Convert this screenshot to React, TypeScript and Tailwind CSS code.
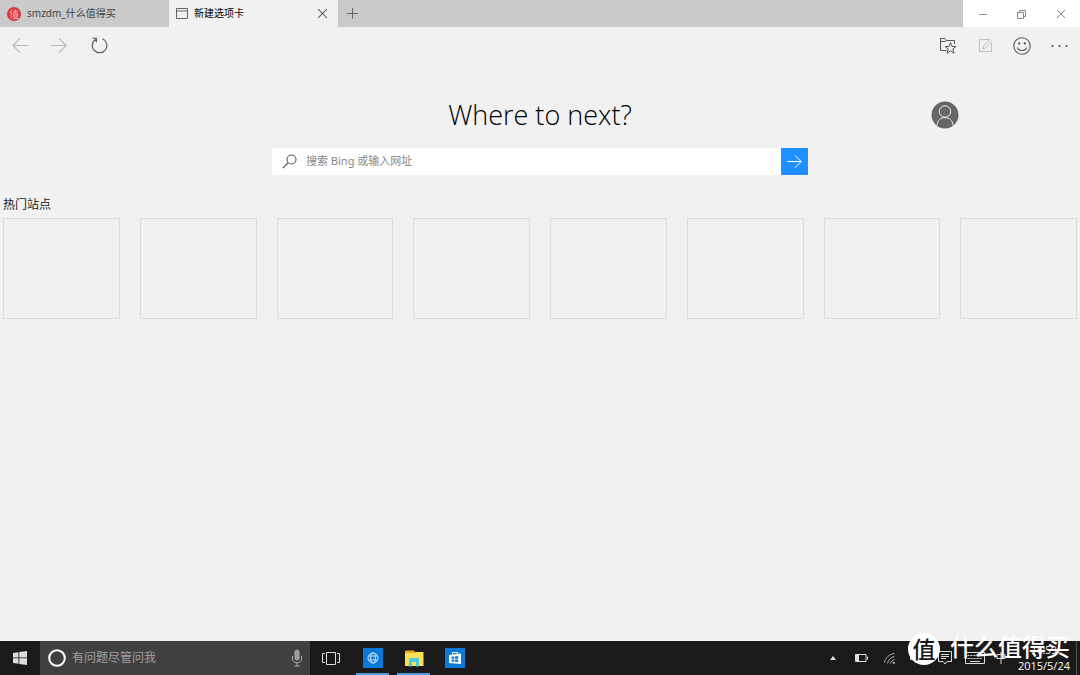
import type { ReactNode } from 'react'

const tiles = [1, 2, 3, 4, 5, 6, 7, 8]

export default function App() {
  return (
    <div className="relative flex h-screen w-full flex-col overflow-hidden bg-[#f1f1f1] font-['Noto_Sans','Noto_Sans_CJK_SC',sans-serif] text-[11px] text-[#222]">
      <TabStrip />
      <Toolbar />
      <NewTabPage />
      <Taskbar />
      <Watermark />
    </div>
  )
}

function TabStrip() {
  return (
    <header className="flex h-[27px] shrink-0 bg-[#cacaca]">
      <button className="flex w-[169px] items-center gap-[6px] pl-[7px] text-[#444]">
        <svg width="14" height="14" viewBox="0 0 14 14">
          <circle cx="7" cy="7" r="7" fill="#d9363f" />
          <path d="M5 2.5 3 6M4.2 5v6M6 4.2h5M8.5 2.5 8 6M6.6 6h3.8v4H6.6zM6.6 8h3.8M5.6 11.5h6" fill="none" stroke="#f7c9ca" strokeWidth=".8" />
        </svg>
        <span className="text-[10px]">smzdm_什么值得买</span>
      </button>
      <div className="flex w-[169px] items-center bg-[#f1f1f1] pl-[7px] text-black">
        <svg width="12" height="11" viewBox="0 0 12 11" fill="none" stroke="#666">
          <path d="M.5.5h11v10H.5zM.5 3h11" />
        </svg>
        <span className="ml-[6px] grow text-[10px]">新建选项卡</span>
        <button aria-label="关闭选项卡" className="mr-[10px]">
          <Cross size={11} color="#666" />
        </button>
      </div>
      <button aria-label="新建选项卡" className="flex w-[28px] items-center justify-center">
        <svg width="11" height="11" viewBox="0 0 11 11" stroke="#666">
          <path d="M5.5 0v11M0 5.5h11" />
        </svg>
      </button>
      <div className="ml-auto flex w-[117px] bg-white">
        <WindowButton label="最小化">
          <svg width="10" height="10" viewBox="0 0 10 10" stroke="#999">
            <path d="M1 5.5h8" />
          </svg>
        </WindowButton>
        <WindowButton label="还原">
          <svg width="10" height="10" viewBox="0 0 10 10" fill="none" stroke="#888">
            <path d="M.5 3.5h6v6h-6zM2.5 3.5v-2h6v6h-2" />
          </svg>
        </WindowButton>
        <WindowButton label="关闭">
          <Cross size={10} color="#888" />
        </WindowButton>
      </div>
    </header>
  )
}

function WindowButton({ label, children }: { label: string; children: ReactNode }) {
  return (
    <button aria-label={label} className="flex flex-1 items-center justify-center">
      {children}
    </button>
  )
}

function Cross({ size, color }: { size: number; color: string }) {
  return (
    <svg width={size} height={size} viewBox="0 0 10 10" stroke={color}>
      <path d="M1 1l8 8M9 1 1 9" />
    </svg>
  )
}

function Arrow({ size, color, back }: { size: number; color: string; back?: boolean }) {
  return (
    <svg width={size} height={size} viewBox="0 0 18 18" fill="none" stroke={color} strokeWidth="1.2">
      <path d={back ? 'M17.5 9H1M8.5 1.5 1 9l7.5 7.5' : 'M.5 9h16.500M9.500 1.500 17 9l-7.500 7.500'} />
    </svg>
  )
}

function Toolbar() {
  return (
    <nav className="flex h-[37px] shrink-0 items-center px-3">
      <button aria-label="后退" disabled>
        <Arrow size={17} color="#b8b8b8" back />
      </button>
      <button aria-label="前进" disabled className="ml-[21px]">
        <Arrow size={17} color="#b8b8b8" />
      </button>
      <button aria-label="刷新" className="ml-[24px]">
        <svg width="17" height="17" viewBox="0 0 17 17" fill="none" stroke="#555" strokeWidth="1.1">
          <path d="M5.2 2A7.300 7.300 0 1 0 11.500 1.800M1.500 1.300H5.400V5.300" />
        </svg>
      </button>
      <div className="ml-auto flex items-center">
        <button aria-label="收藏夹">
          <svg width="18" height="18" viewBox="0 0 18 18" fill="none" stroke="#555">
            <path d="M7.5 13.5H1.500V1.500H6L7.500 3.500H15.500V7M1.500 4.500H6L7.500 3.500" />
            <path d="M11.500 5.500 13 9.500H17L13.800 12 15 16.300 11.500 13.800 8 16.300 9.200 12 6 9.500H10z" fill="#f1f1f1" />
          </svg>
        </button>
        <button aria-label="做笔记" disabled className="ml-[21px]">
          <svg width="15" height="15" viewBox="0 0 15 15" fill="none" stroke="#c0c0c0">
            <path d="M11 1.500H1.500v12h12V5M4.500 11l1-3L12 1.500l2 2L7.500 10z" />
          </svg>
        </button>
        <button aria-label="反馈" className="ml-[20px]">
          <svg width="18" height="18" viewBox="0 0 18 18" fill="none" stroke="#555" strokeWidth="1.1">
            <circle cx="9" cy="9" r="8.2" />
            <path d="M4.500 10.500C5.500 14.500 12.500 14.500 13.500 10.500" />
            <circle cx="6.200" cy="6.500" r=".6" fill="#444" />
            <circle cx="11.800" cy="6.500" r=".6" fill="#444" />
          </svg>
        </button>
        <button aria-label="更多" className="ml-[20px]">
          <svg width="17" height="4" viewBox="0 0 17 4" fill="#444">
            <circle cx="1.500" cy="2" r="1" />
            <circle cx="8.500" cy="2" r="1" />
            <circle cx="15.500" cy="2" r="1" />
          </svg>
        </button>
      </div>
    </nav>
  )
}

function NewTabPage() {
  return (
    <main className="flex-1">
      <div className="grid grid-cols-[1fr_auto_1fr] items-center pt-[29px]">
        <h1 className="col-start-2 font-['Open_Sans','Noto_Sans',sans-serif] text-[27px] leading-[44px] font-light text-black">
          Where to next?
        </h1>
        <button aria-label="帐户" className="mr-[121px] justify-self-end">
          <svg width="28" height="28" viewBox="0 0 28 28" fill="none" stroke="#eee">
            <circle cx="14" cy="14" r="13.500" fill="#666" stroke="none" />
            <circle cx="14" cy="10.500" r="5.700" />
            <path d="M6 24.500C6 14 22 14 22 24.500" />
          </svg>
        </button>
      </div>

      <form className="mx-auto mt-[11px] flex h-[27px] w-[536px] bg-white" onSubmit={(e) => e.preventDefault()}>
        <label htmlFor="search" className="flex w-[34px] items-center pl-[10px]">
          <svg width="15" height="15" viewBox="0 0 15 15" fill="none" stroke="#555" strokeWidth="1.1">
            <circle cx="9.500" cy="5.500" r="4.500" />
            <path d="M6 9 .8 14.200" />
          </svg>
        </label>
        <input
          id="search"
          type="text"
          placeholder="搜索 Bing 或输入网址"
          className="min-w-0 flex-1 text-[11px] outline-none placeholder:text-[#888]"
        />
        <button aria-label="转到" className="flex w-[27px] items-center justify-center bg-[#1e90ff]">
          <Arrow size={15} color="#fff" />
        </button>
      </form>

      <section className="px-[3px] pt-[21px]">
        <h2 className="text-[12px] leading-[18px]">热门站点</h2>
        <div className="mt-1 grid grid-cols-8 gap-[20px]">
          {tiles.map((tile) => (
            <div key={tile} className="h-[101px] border border-[#dcdcdc]" />
          ))}
        </div>
      </section>
    </main>
  )
}

function Taskbar() {
  return (
    <footer className="flex h-[34px] shrink-0 items-stretch bg-[#1b191a] text-white">
      <button aria-label="开始" className="flex w-[40px] items-center justify-center">
        <svg width="14" height="14" viewBox="0 0 14 14" fill="#ddd">
          <path d="M0 2 5.500 1.200V6.500H0zM6.300 1.100 14 0V6.500H6.300zM0 7.300H5.500V12.700L0 12zM6.300 7.300H14V14L6.300 12.900z" />
        </svg>
      </button>
      <div className="flex w-[270px] items-center bg-[#404040] pl-[8px]">
        <svg width="18" height="18" viewBox="0 0 18 18">
          <circle cx="9" cy="9" r="7.800" fill="none" stroke="#fff" strokeWidth="2" />
        </svg>
        <input
          aria-label="有问题尽管问我"
          placeholder="有问题尽管问我"
          className="ml-[6px] min-w-0 flex-1 text-[12px] outline-none placeholder:text-[#a0a0a0]"
        />
        <button aria-label="语音" className="mr-[7px]">
          <svg width="12" height="18" viewBox="0 0 12 18" fill="none" stroke="#aaa">
            <rect x="4" y="1" width="4" height="10" rx="2" fill="#999" />
            <path d="M1.500 7v3c0 5 9 5 9 0V7M6 14v3M3.500 17h5" />
          </svg>
        </button>
      </div>
      <button aria-label="任务视图" className="flex w-[42px] items-center justify-center">
        <svg width="18" height="13" viewBox="0 0 18 13" fill="none" stroke="#ddd">
          <path d="M4.500.5h9v12h-9zM3 1.500H.5v9H3M15 1.500h2.500v9H15" />
        </svg>
      </button>
      <TaskButton label="Edge" active>
        <rect width="20" height="20" fill="#0a78d6" />
        <g stroke="#d6ebff" fill="none" strokeWidth=".9">
          <circle cx="10" cy="10" r="5" />
          <ellipse cx="10" cy="10" rx="2.300" ry="5" />
          <path d="M5.500 8h9M5.500 12h9" />
        </g>
      </TaskButton>
      <TaskButton label="文件资源管理器" active>
        <path d="M1 4h18.500v14H1z" fill="#fbe05a" />
        <path d="M1 2.500h9L11.500 5H1z" fill="#f5a91e" />
        <path d="M5 10h10v8.500h-3V14H8v4.500H5z" fill="#4cc8e6" />
      </TaskButton>
      <TaskButton label="应用商店">
        <rect width="20" height="20" fill="#0a78d6" />
        <path d="M4 7 16 5.500V16L4 15z" fill="#fff" />
        <path d="M7.500 7V4.500h5V6" fill="none" stroke="#fff" />
        <path d="M6.500 8.500h2.800v2.200H6.500zM10 8.400l3.300-.3v2.600H10zM6.500 11.400h2.800v2.300H6.500zM10 11.400h3.300v2.700L10 13.800z" fill="#0a78d6" />
      </TaskButton>
      <SystemTray />
    </footer>
  )
}

function TaskButton({ label, active, children }: { label: string; active?: boolean; children: ReactNode }) {
  return (
    <button aria-label={label} className="flex w-[41px] items-center justify-center px-1">
      <span className={`flex h-full w-[33px] items-center justify-center border-y-2 border-t-transparent ${active ? 'border-b-[#4a9ce8]' : 'border-b-transparent'}`}>
        <svg width="20" height="20" viewBox="0 0 20 20">
          {children}
        </svg>
      </span>
    </button>
  )
}

function SystemTray() {
  return (
    <div className="ml-auto flex items-center">
      <svg width="6" height="4" viewBox="0 0 6 4" fill="#ddd" className="mr-[19px]">
        <path d="M0 4 3 0l3 4z" />
      </svg>
      <svg width="13" height="8" viewBox="0 0 13 8" className="mr-[16px]" fill="none" stroke="#ddd">
        <path d="M.5.5h10.500v7H.5zM12.500 2.500v3" />
        <path d="M1 1h3v6H1z" fill="#ddd" stroke="none" />
      </svg>
      <svg width="11" height="11" viewBox="0 0 11 11" className="mr-[15px]" fill="none" stroke="#aaa">
        <path d="M.5 10C1 5 5 1 10.500.5M3.500 10.500C4 7 7 4 10.500 3.500M6.500 10.500C7 8.500 8.500 7 10.500 6.500" />
        <circle cx="9.800" cy="9.800" r=".8" fill="#ddd" />
      </svg>
      <svg width="12" height="12" viewBox="0 0 12 12" className="mr-[16px]" fill="none" stroke="#ddd">
        <path d="M.5 4.500h2l3-3v9l-3-3h-2zM8 4v4" />
      </svg>
      <svg width="14" height="14" viewBox="0 0 14 14" className="mr-[13px]" fill="none" stroke="#ddd">
        <path d="M.5.5h13v10H9l-2 2.500-2-2.500H.5zM3 3.500h8M3 5.500h8M3 7.500h5" />
      </svg>
      <svg width="20" height="12" viewBox="0 0 20 12" className="mr-[11px]" fill="none" stroke="#ddd">
        <path d="M.5.5h19v11H.5z" />
        <path d="M2.500 3.500h15M2.500 6.500h15" strokeDasharray="2 1" />
        <path d="M5 9.500h10" />
      </svg>
      <svg width="10" height="12" viewBox="0 0 10 12" fill="none" stroke="#ddd" className="mr-[12px]">
        <path d="M1 2.500h8v4H1zM5 0v12" />
      </svg>
      <div className="mr-[6px] text-center font-['Open_Sans','Noto_Sans',sans-serif] text-[10px] leading-[16px]">
        <div>16:59</div>
        <div className="text-[11px]">2015/5/24</div>
      </div>
      <button aria-label="显示桌面" className="w-[4px] self-stretch border-l border-[#555]" />
    </div>
  )
}

function Watermark() {
  return (
    <div className="pointer-events-none absolute right-[10px] bottom-[10px] flex items-center gap-[10px] text-white">
      <span className="flex size-[32px] items-center justify-center rounded-full bg-white text-[23px] leading-none font-medium text-[#1b191a]">
        值
      </span>
      <span className="-mt-1 text-[24px] leading-[32px] font-medium">什么值得买</span>
    </div>
  )
}
